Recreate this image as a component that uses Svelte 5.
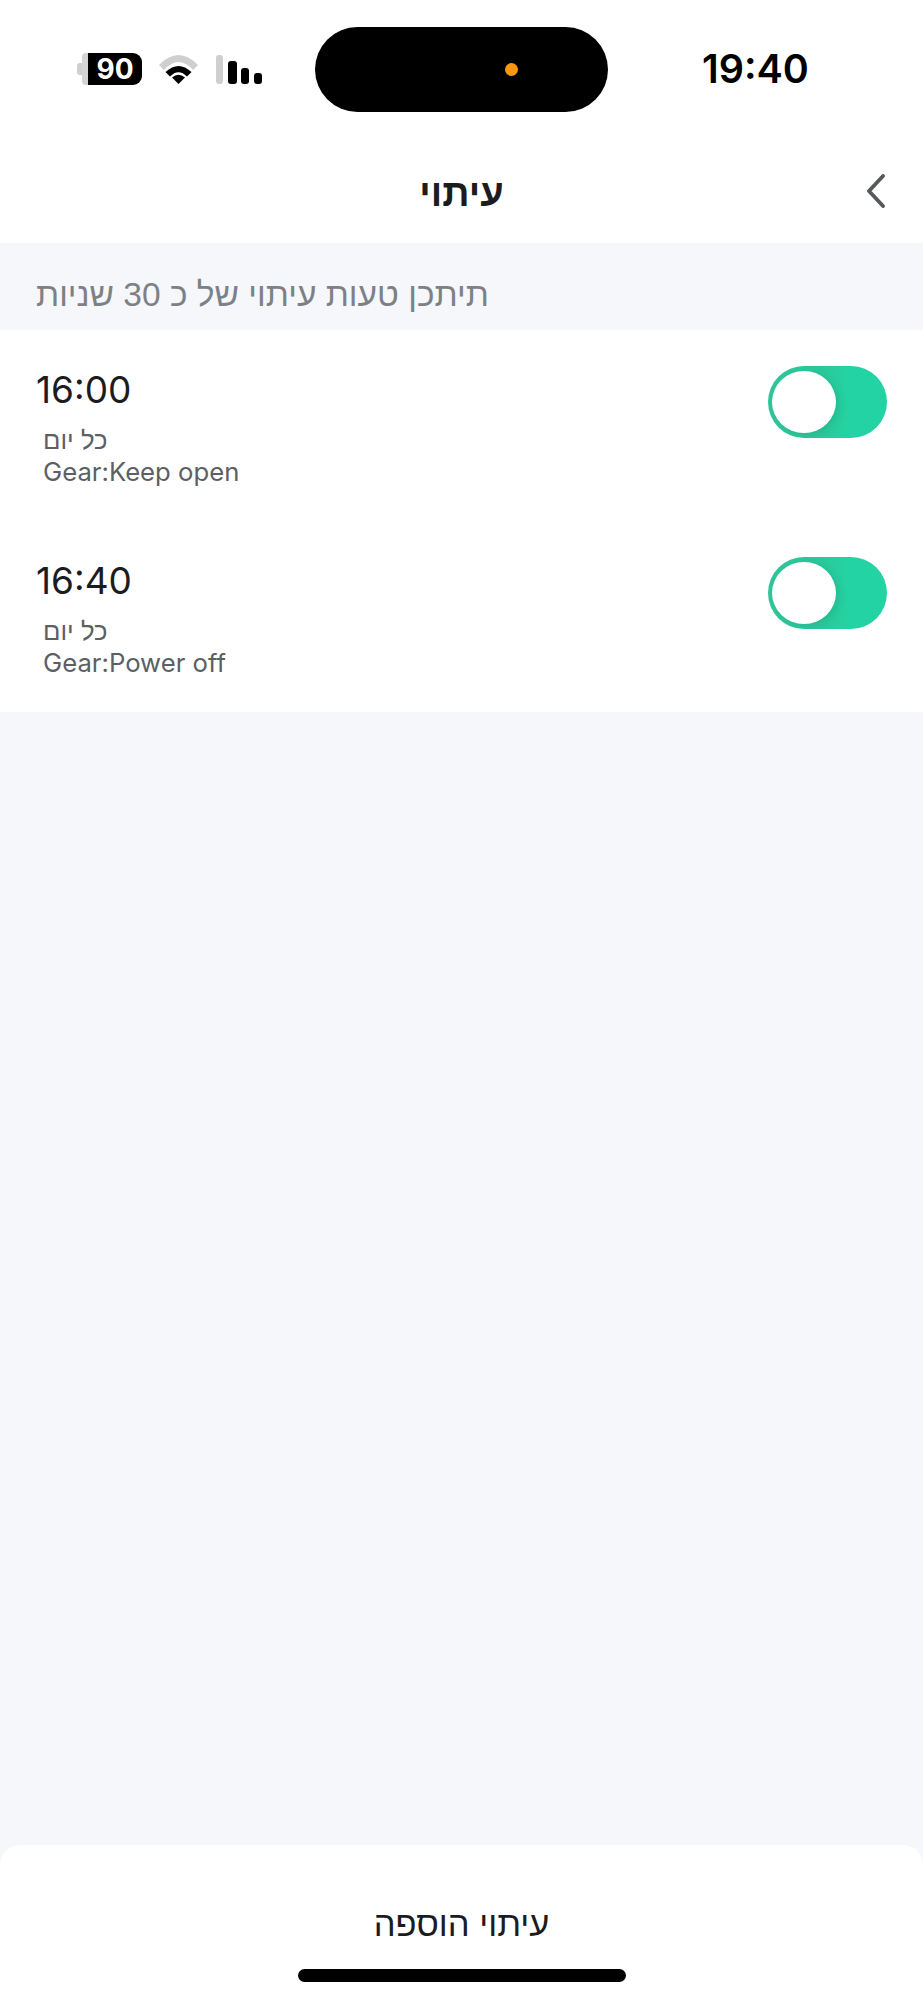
<script>
  const timers = [
    { time: '16:00', days: 'כל יום', gear: 'Gear:Keep open' },
    { time: '16:40', days: 'כל יום', gear: 'Gear:Power off' }
  ];
</script>

<div class="screen">
  <div class="status">
    <div class="status-left">
      <div class="battery"><span class="nub"></span><span class="edge"></span><span class="cell">90</span></div>
      <svg class="wifi" width="39" height="29" viewBox="0 0 39 29">
        <path d="M0 10 Q19.5 -10 39 10 L34 15 Q19.5 -1 5 15 Z" fill="#cfcfcf" />
        <path d="M6.5 17 Q19.5 5 32.5 17 L28 21.5 Q19.5 13 11 21.5 Z" fill="#000" />
        <path d="M19.5 29 L13 22.5 Q19.5 17 26 22.5 Z" fill="#000" />
      </svg>
      <div class="signal">
        <span class="bar b1"></span>
        <span class="bar b2"></span>
        <span class="bar b3"></span>
        <span class="bar b4"></span>
      </div>
    </div>
    <div class="island"><span class="dot"></span></div>
    <div class="clock">19:40</div>
  </div>

  <header class="nav">
    <h1>עיתוי</h1>
    <svg class="back" width="20" height="34" viewBox="0 0 20 34">
      <path d="M17 2 L3 17 L17 32" fill="none" stroke="#55585c" stroke-width="3.8" stroke-linecap="round" stroke-linejoin="round" />
    </svg>
  </header>

  <div class="notice"><span dir="rtl">תיתכן טעות עיתוי של כ 30 שניות</span></div>

  <div class="list">
    {#each timers as t}
      <div class="row">
        <div class="info">
          <div class="time">{t.time}</div>
          <div class="sub" dir="rtl">{t.days}</div>
          <div class="sub">{t.gear}</div>
        </div>
        <div class="toggle"><span class="knob"></span></div>
      </div>
    {/each}
  </div>

  <div class="spacer"></div>

  <div class="sheet">
    <div class="add" dir="rtl">עיתוי הוספה</div>
    <div class="home"></div>
  </div>
</div>

<style>
  :global(body) {
    margin: 0;
  }
  .screen {
    width: 923px;
    height: 2000px;
    display: flex;
    flex-direction: column;
    background: #f5f7fb;
    font-family: Inter, "Liberation Sans", sans-serif;
    color: #1c1c1e;
    overflow: hidden;
  }
  .status {
    height: 143px;
    flex: none;
    background: #fff;
    display: grid;
    grid-template-columns: 315px 293px 1fr;
    box-sizing: border-box;
    padding-top: 27px;
    align-items: start;
  }
  .status-left {
    display: flex;
    align-items: center;
    height: 32px;
    margin-top: 26px;
    padding-left: 77px;
  }
  .battery {
    display: flex;
    align-items: center;
  }
  .nub {
    width: 5px;
    height: 12px;
    background: #cfcfcf;
    border-radius: 3px 0 0 3px;
  }
  .edge {
    width: 6px;
    height: 32px;
    background: #d4d4d4;
    border-radius: 4px 0 0 4px;
  }
  .cell {
    width: 54px;
    height: 32px;
    background: #000;
    color: #fff;
    border-radius: 0 9px 9px 0;
    font-size: 28px;
    font-weight: 700;
    line-height: 32px;
    text-align: center;
  }
  .wifi {
    margin-left: 17px;
  }
  .signal {
    display: flex;
    align-items: flex-end;
    height: 29px;
    margin-left: 18px;
  }
  .bar {
    display: block;
    border-radius: 3px;
    background: #000;
  }
  .b1 {
    width: 7px;
    height: 29px;
    background: #cfcfcf;
  }
  .b2 {
    width: 9px;
    height: 23px;
    margin-left: 5px;
  }
  .b3 {
    width: 8px;
    height: 16px;
    margin-left: 4px;
  }
  .b4 {
    width: 8px;
    height: 11px;
    margin-left: 5px;
  }
  .island {
    height: 85px;
    background: #000;
    border-radius: 43px;
    display: flex;
    align-items: center;
    justify-content: flex-end;
    padding-right: 90px;
  }
  .dot {
    width: 13px;
    height: 13px;
    border-radius: 50%;
    background: #f9980f;
  }
  .clock {
    margin-left: 94px;
    margin-top: 20px;
    font-size: 39.5px;
    line-height: 44px;
    font-weight: 600;
    color: #000;
  }
  .nav {
    position: relative;
    height: 100px;
    flex: none;
    background: #fff;
    display: flex;
    align-items: center;
    justify-content: center;
  }
  h1 {
    margin: 0;
    font-size: 38px;
    font-weight: 700;
    font-family: "Liberation Sans", sans-serif;
    color: #1c1c1e;
  }
  .back {
    position: absolute;
    right: 37px;
    top: 31px;
  }
  .notice {
    height: 87px;
    flex: none;
    box-sizing: border-box;
    padding: 17px 0 0 36px;
    display: flex;
    align-items: center;
    font-size: 33.5px;
    color: #7d8186;
    font-family: "Liberation Sans", sans-serif;
  }
  .list {
    background: #fff;
    height: 382px;
    flex: none;
    display: flex;
    flex-direction: column;
  }
  .row {
    height: 191px;
    flex: none;
    box-sizing: border-box;
    display: flex;
    justify-content: space-between;
    align-items: flex-start;
    padding: 36px 36px 0;
  }
  .info {
    display: flex;
    flex-direction: column;
    align-items: flex-start;
  }
  .time {
    font-size: 37px;
    line-height: 44px;
    margin: 2px 0 12px;
    color: #1c1c1e;
  }
  .sub {
    font-size: 25.7px;
    line-height: 32px;
    margin-left: 7px;
    color: #5c5f63;
  }
  .toggle {
    width: 119px;
    height: 72px;
    border-radius: 36px;
    background: linear-gradient(90deg, #30c69b 0%, #2ac99c 45%, #24d3a3 70%);
    padding: 5px 0 0 4px;
    box-sizing: border-box;
  }
  .knob {
    display: block;
    width: 64px;
    height: 62px;
    border-radius: 50%;
    background: #fff;
    box-shadow: 3px 2px 8px rgba(0, 60, 40, 0.12);
  }
  .spacer {
    flex: 1;
  }
  .sheet {
    height: 155px;
    flex: none;
    background: #fff;
    border-radius: 20px 20px 0 0;
    display: flex;
    flex-direction: column;
    align-items: center;
  }
  .add {
    margin-top: 59px;
    font-size: 34.5px;
    line-height: 40px;
    color: #1c1c1e;
    font-family: "Liberation Sans", sans-serif;
  }
  .home {
    width: 328px;
    height: 13px;
    margin-top: 25px;
    border-radius: 7px;
    background: #000;
  }
</style>
